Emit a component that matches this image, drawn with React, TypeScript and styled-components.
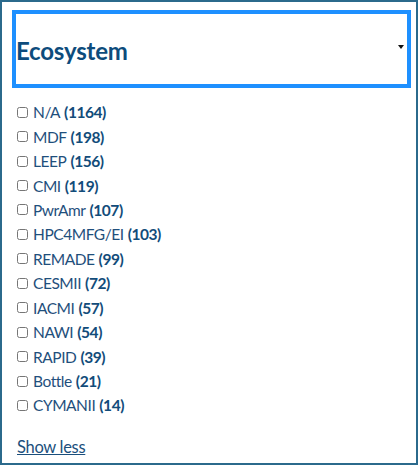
import { styled, createGlobalStyle } from "styled-components";

const GlobalStyle = createGlobalStyle`
  body {
    margin: 0;
    background: #ffffff;
    font-family: Lato, "Liberation Sans", sans-serif;
  }
`;

const ecosystems = [
  { name: "N/A", count: 1164 },
  { name: "MDF", count: 198 },
  { name: "LEEP", count: 156 },
  { name: "CMI", count: 119 },
  { name: "PwrAmr", count: 107 },
  { name: "HPC4MFG/EI", count: 103 },
  { name: "REMADE", count: 99 },
  { name: "CESMII", count: 72 },
  { name: "IACMI", count: 57 },
  { name: "NAWI", count: 54 },
  { name: "RAPID", count: 39 },
  { name: "Bottle", count: 21 },
  { name: "CYMANII", count: 14 },
];

const App = () => {
  return (
    <>
      <GlobalStyle />
      <FilterPanel>
        <SelectBox>
          <SelectLabel>Ecosystem</SelectLabel>
          <SelectArrow />
        </SelectBox>
        <OptionList>
          {ecosystems.map((item) => (
            <OptionRow key={item.name}>
              <OptionCheck type="checkbox" />
              <OptionName>{item.name}</OptionName>
              <OptionCount>({item.count})</OptionCount>
            </OptionRow>
          ))}
        </OptionList>
        <ShowLess href="#">Show less</ShowLess>
      </FilterPanel>
    </>
  );
};

export default App;

const FilterPanel = styled.div`
  width: 418px;
  height: 465px;
  box-sizing: border-box;

  border: 2px solid #2b6a8c;

  padding: 8px 5px 0 10px;

  display: flex;
  flex-direction: column;
`;

const SelectBox = styled.div`
  width: 399px;
  height: 78px;
  box-sizing: border-box;

  border: 4px solid #1e90ff;

  display: flex;
  align-items: center;
  justify-content: space-between;

  padding: 0 3px 0 0;
`;

const SelectLabel = styled.div`
  font-size: 24px;
  font-weight: 700;
  letter-spacing: -0.2px;
  color: #0d4c7c;
  padding-top: 2px;
`;

const SelectArrow = styled.div`
  width: 0;
  height: 0;
  border-left: 3px solid transparent;
  border-right: 3px solid transparent;
  border-top: 4px solid #111111;
  margin-bottom: 4px;
`;

const OptionList = styled.div`
  display: flex;
  flex-direction: column;

  margin-top: 12px;
  padding-left: 4px;
`;

const OptionRow = styled.label`
  height: 24.45px;

  display: flex;
  align-items: center;

  font-size: 15.5px;
  letter-spacing: -0.45px;
  color: #1f4f7c;
`;

const OptionCheck = styled.input`
  width: 11px;
  height: 11px;
  margin: 0 5px 0 1px;
`;

const OptionName = styled.span`
  margin-right: 4px;
`;

const OptionCount = styled.span`
  font-weight: 700;
  color: #124c7a;
`;

const ShowLess = styled.a`
  margin-top: 19px;
  margin-left: 5px;

  font-size: 16.5px;
  letter-spacing: -0.3px;
  color: #1b4f7c;
  text-decoration: underline;
  align-self: flex-start;
`;
